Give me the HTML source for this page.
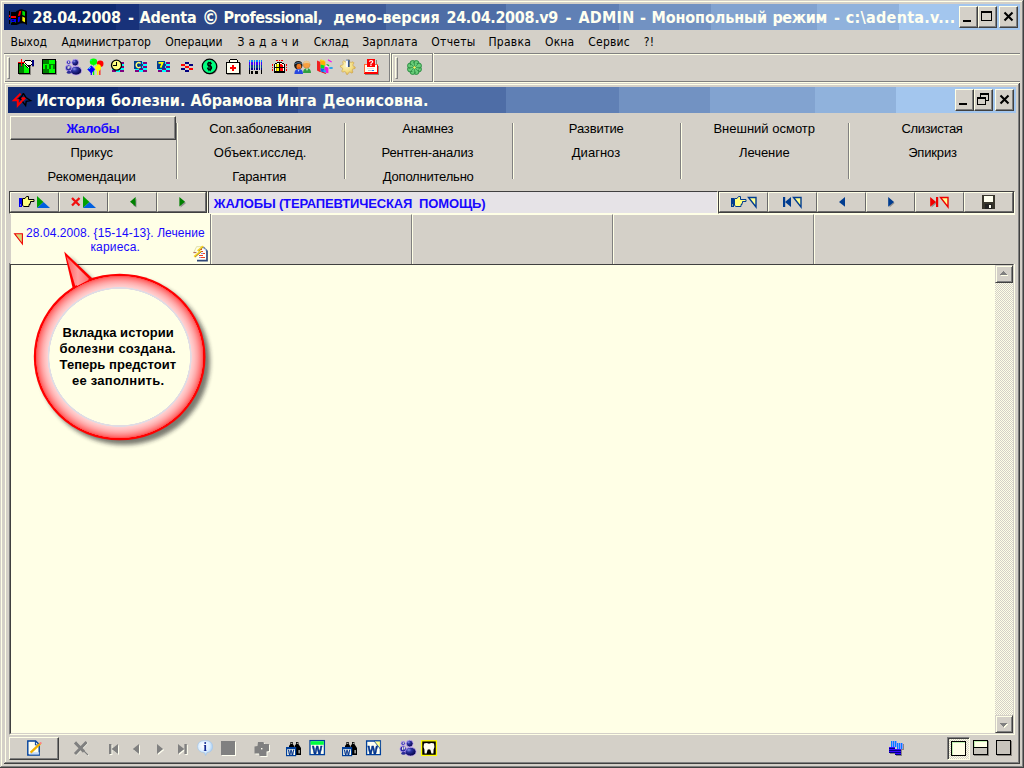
<!DOCTYPE html>
<html lang="ru"><head><meta charset="utf-8"><title>Adenta</title>
<style>
html,body{margin:0;padding:0}
body{width:1024px;height:768px;background:#d4d0c8;position:relative;overflow:hidden;font-family:"Liberation Sans",sans-serif}
div,span{position:absolute;box-sizing:border-box}
.t{white-space:pre}
.g{left:0;top:0;width:0;height:0}
.ln{}
.cap{height:26px;}
.cb{width:19px;height:22px;background:#d4d0c8;border:1px solid;border-color:#ffffe6 #404040 #404040 #ffffe6;box-shadow:inset -1px -1px 0 #808080}
.btn{background:#d4d0c8;border:1px solid;border-color:#ffffe6 #404040 #404040 #ffffe6;box-shadow:inset -1px -1px 0 #808080}
.sb{width:49px;height:20px;top:0;border:1px solid;border-color:#ffffe6 #6a6a6a #6a6a6a #ffffe6}
.sep{width:2px;height:56px;top:123px;border-left:1px solid #808080;border-right:1px solid #ffffe6}
.cell{top:214px;height:50px;border-top:1px solid #ffffe6;border-left:1px solid #ffffe6;border-right:1px solid #808080;background:#d4d0c8}
</style></head>
<body>
<div class="g" id="frame">
<div style="left:1px;top:1px;width:1022px;height:1px;background:#ffffe6"></div><div style="left:1px;top:1px;width:1px;height:765px;background:#ffffe6"></div>
<div style="left:1022px;top:1px;width:1px;height:766px;background:#808080"></div><div style="left:1px;top:766px;width:1022px;height:1px;background:#808080"></div>
<div style="left:1023px;top:0px;width:1px;height:768px;background:#404040"></div><div style="left:0px;top:767px;width:1024px;height:1px;background:#404040"></div>
</div>
<div class="g" id="titlebar">
<div class="cap" style="left:4px;top:4px;width:1016px;background:linear-gradient(to right,#0f2a70 0px,#0f2a70 112px,#18327a 112px,#18327a 135px,#2b4788 135px,#2b4788 296px,#3e5b98 296px,#3e5b98 382px,#4e6da6 382px,#4e6da6 502px,#6080b5 502px,#6080b5 615px,#7292c2 615px,#7292c2 707px,#82a3d0 707px,#82a3d0 813px,#90b2dc 813px,#90b2dc 895px,#a3c6ee 895px)"></div>
<div class="cb" style="left:959px;top:6px"><div style="left:3px;top:13px;width:8px;height:2px;background:#000"></div></div><div class="cb" style="left:978px;top:6px"><div style="left:2px;top:4px;width:11px;height:10px;border:1px solid #000;border-top:2px solid #000"></div></div><div class="cb" style="left:999px;top:6px"><svg width="17" height="20" style="position:absolute;left:0;top:0"><path d="M4.5,5.5 L12.5,13.5 M12.5,5.5 L4.5,13.5" stroke="#000" stroke-width="2.1" fill="none"/></svg></div>
<span class="t" style='left:32.5px;top:8px;line-height:20px;font:bold 16px "DejaVu Sans Condensed","DejaVu Sans","Liberation Sans",sans-serif;font-stretch:condensed;letter-spacing:-0.283px;color:#fffff0'>28.04.2008</span>
<span class="t" style='left:128.0px;top:8px;line-height:20px;font:bold 16px "DejaVu Sans Condensed","DejaVu Sans","Liberation Sans",sans-serif;font-stretch:condensed;letter-spacing:0px;color:#fffff0'>-</span>
<span class="t" style='left:139.5px;top:8px;line-height:20px;font:bold 16px "DejaVu Sans Condensed","DejaVu Sans","Liberation Sans",sans-serif;font-stretch:condensed;letter-spacing:-0.169px;color:#fffff0'>Adenta</span>
<span class="t" style='left:202px;top:6.1px;line-height:20px;font:bold 19px "DejaVu Sans Condensed","DejaVu Sans","Liberation Sans",sans-serif;font-stretch:condensed;letter-spacing:0px;color:#fffff0'>©</span>
<span class="t" style='left:223.5px;top:8px;line-height:20px;font:bold 16px "DejaVu Sans Condensed","DejaVu Sans","Liberation Sans",sans-serif;font-stretch:condensed;letter-spacing:-0.535px;color:#fffff0'>Professional,</span>
<span class="t" style='left:333.2px;top:8px;line-height:20px;font:bold 16px "DejaVu Sans Condensed","DejaVu Sans","Liberation Sans",sans-serif;font-stretch:condensed;letter-spacing:0.038px;color:#fffff0'>демо-версия</span>
<span class="t" style='left:446.5px;top:8px;line-height:20px;font:bold 16px "DejaVu Sans Condensed","DejaVu Sans","Liberation Sans",sans-serif;font-stretch:condensed;letter-spacing:-0.343px;color:#fffff0'>24.04.2008.v9</span>
<span class="t" style='left:565.6px;top:8px;line-height:20px;font:bold 16px "DejaVu Sans Condensed","DejaVu Sans","Liberation Sans",sans-serif;font-stretch:condensed;letter-spacing:0px;color:#fffff0'>-</span>
<span class="t" style='left:578.4px;top:8px;line-height:20px;font:bold 16px "DejaVu Sans Condensed","DejaVu Sans","Liberation Sans",sans-serif;font-stretch:condensed;letter-spacing:0.257px;color:#fffff0'>ADMIN</span>
<span class="t" style='left:640.0px;top:8px;line-height:20px;font:bold 16px "DejaVu Sans Condensed","DejaVu Sans","Liberation Sans",sans-serif;font-stretch:condensed;letter-spacing:0px;color:#fffff0'>-</span>
<span class="t" style='left:651.4px;top:8px;line-height:20px;font:bold 16px "DejaVu Sans Condensed","DejaVu Sans","Liberation Sans",sans-serif;font-stretch:condensed;letter-spacing:-0.09px;color:#fffff0'>Монопольный</span>
<span class="t" style='left:772.4px;top:8px;line-height:20px;font:bold 16px "DejaVu Sans Condensed","DejaVu Sans","Liberation Sans",sans-serif;font-stretch:condensed;letter-spacing:-0.346px;color:#fffff0'>режим</span>
<span class="t" style='left:834.0px;top:8px;line-height:20px;font:bold 16px "DejaVu Sans Condensed","DejaVu Sans","Liberation Sans",sans-serif;font-stretch:condensed;letter-spacing:0px;color:#fffff0'>-</span>
<span class="t" style='left:845.8px;top:8px;line-height:20px;font:bold 16px "DejaVu Sans Condensed","DejaVu Sans","Liberation Sans",sans-serif;font-stretch:condensed;letter-spacing:0.25px;color:#fffff0'>c:\adenta.v...</span>
</div>
<div class="g" id="menubar">
<span class="t" style='left:10.6px;top:35.4px;line-height:16px;font:12px "DejaVu Sans Condensed","DejaVu Sans","Liberation Sans",sans-serif;font-stretch:condensed;letter-spacing:-0.005px;color:#000'>Выход</span>
<span class="t" style='left:61.4px;top:35.4px;line-height:16px;font:12px "DejaVu Sans Condensed","DejaVu Sans","Liberation Sans",sans-serif;font-stretch:condensed;letter-spacing:-0.005px;color:#000'>Администратор</span>
<span class="t" style='left:165.3px;top:35.4px;line-height:16px;font:12px "DejaVu Sans Condensed","DejaVu Sans","Liberation Sans",sans-serif;font-stretch:condensed;letter-spacing:0.01px;color:#000'>Операции</span>
<span class="t" style='left:237.4px;top:35.4px;line-height:16px;font:12px "DejaVu Sans Condensed","DejaVu Sans","Liberation Sans",sans-serif;font-stretch:condensed;letter-spacing:0.327px;color:#000'>З а д а ч и</span>
<span class="t" style='left:313.7px;top:35.4px;line-height:16px;font:12px "DejaVu Sans Condensed","DejaVu Sans","Liberation Sans",sans-serif;font-stretch:condensed;letter-spacing:0.005px;color:#000'>Склад</span>
<span class="t" style='left:362.2px;top:35.4px;line-height:16px;font:12px "DejaVu Sans Condensed","DejaVu Sans","Liberation Sans",sans-serif;font-stretch:condensed;letter-spacing:0.221px;color:#000'>Зарплата</span>
<span class="t" style='left:431.3px;top:35.4px;line-height:16px;font:12px "DejaVu Sans Condensed","DejaVu Sans","Liberation Sans",sans-serif;font-stretch:condensed;letter-spacing:0.281px;color:#000'>Отчеты</span>
<span class="t" style='left:488.4px;top:35.4px;line-height:16px;font:12px "DejaVu Sans Condensed","DejaVu Sans","Liberation Sans",sans-serif;font-stretch:condensed;letter-spacing:0.265px;color:#000'>Правка</span>
<span class="t" style='left:545.1px;top:35.4px;line-height:16px;font:12px "DejaVu Sans Condensed","DejaVu Sans","Liberation Sans",sans-serif;font-stretch:condensed;letter-spacing:0.074px;color:#000'>Окна</span>
<span class="t" style='left:588.3px;top:35.4px;line-height:16px;font:12px "DejaVu Sans Condensed","DejaVu Sans","Liberation Sans",sans-serif;font-stretch:condensed;letter-spacing:0.216px;color:#000'>Сервис</span>
<span class="t" style='left:643.7px;top:35.4px;line-height:16px;font:12px "DejaVu Sans Condensed","DejaVu Sans","Liberation Sans",sans-serif;font-stretch:condensed;letter-spacing:0.27px;color:#000'>?!</span>
</div>
<div class="g" id="toolbar">
<div style="left:4px;top:53px;width:1016px;height:1px;background:#808080"></div><div style="left:4px;top:54px;width:1016px;height:1px;background:#ffffe6"></div>
<div style="left:4px;top:81px;width:1016px;height:1px;background:#808080"></div><div style="left:4px;top:82px;width:1016px;height:1px;background:#ffffe6"></div>
<div style="left:4px;top:54px;width:1px;height:28px;background:#ffffe6"></div>
<div style="left:389px;top:53px;width:1px;height:29px;background:#808080"></div><div style="left:390px;top:53px;width:1px;height:30px;background:#ffffe6"></div><div style="left:391px;top:53px;width:1px;height:29px;background:#808080"></div><div style="left:392px;top:54px;width:1px;height:28px;background:#ffffe6"></div>
<div style="left:432px;top:53px;width:1px;height:29px;background:#808080"></div><div style="left:433px;top:53px;width:1px;height:30px;background:#ffffe6"></div>
<div style="left:7px;top:57px;width:3px;height:22px;border:1px solid;border-color:#ffffe6 #808080 #808080 #ffffe6"></div>
<div style="left:395px;top:57px;width:3px;height:22px;border:1px solid;border-color:#ffffe6 #808080 #808080 #ffffe6"></div>
</div>
<div class="g" id="child-frame">
<div style="left:5px;top:84px;width:1013px;height:1px;background:#ffffe6"></div><div style="left:5px;top:84px;width:1px;height:678px;background:#ffffe6"></div>
<div style="left:1018px;top:84px;width:1px;height:679px;background:#808080"></div><div style="left:5px;top:762px;width:1014px;height:1px;background:#808080"></div>
<div style="left:1019px;top:83px;width:1px;height:681px;background:#404040"></div><div style="left:4px;top:763px;width:1016px;height:1px;background:#404040"></div>
</div>
<div class="g" id="child-titlebar">
<div class="cap" style="left:8px;top:87px;width:1008px;background:linear-gradient(to right,#0f2a70 0px,#0f2a70 110px,#18327a 110px,#18327a 132px,#2b4788 132px,#2b4788 290px,#3e5b98 290px,#3e5b98 382px,#4e6da6 382px,#4e6da6 498px,#6080b5 498px,#6080b5 611px,#7292c2 611px,#7292c2 702px,#82a3d0 702px,#82a3d0 807px,#90b2dc 807px,#90b2dc 888px,#a3c6ee 888px)"></div>
<div class="cb" style="left:955px;top:89px"><div style="left:3px;top:13px;width:8px;height:2px;background:#000"></div></div><div class="cb" style="left:974px;top:89px"><div style="left:5px;top:3px;width:9px;height:8px;border:1px solid #000;border-top:2px solid #000"></div><div style="left:2px;top:7px;width:9px;height:8px;border:1px solid #000;border-top:2px solid #000;background:#d4d0c8"></div></div><div class="cb" style="left:995px;top:89px"><svg width="17" height="20" style="position:absolute;left:0;top:0"><path d="M4.5,5.5 L12.5,13.5 M12.5,5.5 L4.5,13.5" stroke="#000" stroke-width="2.1" fill="none"/></svg></div>
<span class="t" style='left:36.5px;top:91px;line-height:20px;font:bold 16px "DejaVu Sans Condensed","DejaVu Sans","Liberation Sans",sans-serif;font-stretch:condensed;letter-spacing:0.049px;color:#fffff0'>История</span>
<span class="t" style='left:111.0px;top:91px;line-height:20px;font:bold 16px "DejaVu Sans Condensed","DejaVu Sans","Liberation Sans",sans-serif;font-stretch:condensed;letter-spacing:0.049px;color:#fffff0'>болезни.</span>
<span class="t" style='left:190.5px;top:91px;line-height:20px;font:bold 16px "DejaVu Sans Condensed","DejaVu Sans","Liberation Sans",sans-serif;font-stretch:condensed;letter-spacing:0.003px;color:#fffff0'>Абрамова</span>
<span class="t" style='left:277px;top:91px;line-height:20px;font:bold 16px "DejaVu Sans Condensed","DejaVu Sans","Liberation Sans",sans-serif;font-stretch:condensed;letter-spacing:0.161px;color:#fffff0'>Инга</span>
<span class="t" style='left:322.5px;top:91px;line-height:20px;font:bold 16px "DejaVu Sans Condensed","DejaVu Sans","Liberation Sans",sans-serif;font-stretch:condensed;letter-spacing:0.08px;color:#fffff0'>Деонисовна.</span>
</div>
<div class="g" id="tabs">
<div class="btn" style="left:10px;top:116px;width:166px;height:24px;background:#c9c5be"></div>
<div class="sep" style="left:176px"></div>
<div class="sep" style="left:344px"></div>
<div class="sep" style="left:512px"></div>
<div class="sep" style="left:680px"></div>
<div class="sep" style="left:848px"></div>
<span class="t" style='left:66.4px;top:121px;line-height:16px;font:bold 13px "Liberation Sans",sans-serif;letter-spacing:-0.199px;color:#1808ff'>Жалобы</span>
<span class="t" style='left:70.4px;top:145px;line-height:16px;font:13px "Liberation Sans",sans-serif;letter-spacing:0.035px;color:#000'>Прикус</span>
<span class="t" style='left:47.6px;top:169px;line-height:16px;font:13px "Liberation Sans",sans-serif;letter-spacing:-0.042px;color:#000'>Рекомендации</span>
<span class="t" style='left:209.2px;top:121px;line-height:16px;font:13px "Liberation Sans",sans-serif;letter-spacing:-0.193px;color:#000'>Соп.заболевания</span>
<span class="t" style='left:213.8px;top:145px;line-height:16px;font:13px "Liberation Sans",sans-serif;letter-spacing:0.014px;color:#000'>Объект.исслед.</span>
<span class="t" style='left:232.2px;top:169px;line-height:16px;font:13px "Liberation Sans",sans-serif;letter-spacing:-0.199px;color:#000'>Гарантия</span>
<span class="t" style='left:402.2px;top:121px;line-height:16px;font:13px "Liberation Sans",sans-serif;letter-spacing:-0.14px;color:#000'>Анамнез</span>
<span class="t" style='left:381.6px;top:145px;line-height:16px;font:13px "Liberation Sans",sans-serif;letter-spacing:-0.165px;color:#000'>Рентген-анализ</span>
<span class="t" style='left:382.8px;top:169px;line-height:16px;font:13px "Liberation Sans",sans-serif;letter-spacing:-0.211px;color:#000'>Дополнительно</span>
<span class="t" style='left:568.8px;top:121px;line-height:16px;font:13px "Liberation Sans",sans-serif;letter-spacing:-0.124px;color:#000'>Развитие</span>
<span class="t" style='left:571.8px;top:145px;line-height:16px;font:13px "Liberation Sans",sans-serif;letter-spacing:0.017px;color:#000'>Диагноз</span>
<span class="t" style='left:713.4px;top:121px;line-height:16px;font:13px "Liberation Sans",sans-serif;letter-spacing:0.001px;color:#000'>Внешний осмотр</span>
<span class="t" style='left:739.0px;top:145px;line-height:16px;font:13px "Liberation Sans",sans-serif;letter-spacing:-0.062px;color:#000'>Лечение</span>
<span class="t" style='left:901.4px;top:121px;line-height:16px;font:13px "Liberation Sans",sans-serif;letter-spacing:-0.324px;color:#000'>Слизистая</span>
<span class="t" style='left:908.2px;top:145px;line-height:16px;font:13px "Liberation Sans",sans-serif;letter-spacing:-0.171px;color:#000'>Эпикриз</span>
</div>
<div class="g" id="record-bar">
<div style="left:9px;top:191px;width:199px;height:23px;border:1px solid;border-color:#404040 #ffffe6 #ffffe6 #404040"><div style="left:0;top:0;width:197px;height:21px;border-right:1px solid #404040;border-bottom:1px solid #404040"><div class="sb" style="left:0px"></div><div class="sb" style="left:49px"></div><div class="sb" style="left:98px"></div><div class="sb" style="left:147px"></div></div></div>
<div style="left:718px;top:191px;width:297px;height:23px;border:1px solid;border-color:#404040 #ffffe6 #ffffe6 #404040"><div style="left:0;top:0;width:295px;height:21px;border-right:1px solid #404040;border-bottom:1px solid #404040"><div class="sb" style="left:0px"></div><div class="sb" style="left:49px"></div><div class="sb" style="left:98px"></div><div class="sb" style="left:147px"></div><div class="sb" style="left:196px"></div><div class="sb" style="left:245px"></div></div></div>
<div style="left:208px;top:191px;width:510px;height:23px;background:#e6e3e7;border:1px solid;border-color:#404040 #ffffe6 #ffffe6 #404040"></div>
<span class="t" style='left:213.8px;top:196px;line-height:16px;font:bold 13px "Liberation Sans",sans-serif;letter-spacing:-0.154px;color:#1808ff'>ЖАЛОБЫ (ТЕРАПЕВТИЧЕСКАЯ  ПОМОЩЬ)</span>
</div>
<div class="g" id="records">
<div style="left:11px;top:213px;width:199px;height:51px;background:#ffffe6"></div>
<div style="left:210px;top:214px;width:1px;height:50px;background:#808080"></div>
<div class="cell" style="left:211px;width:201px"></div>
<div class="cell" style="left:412px;width:201px"></div>
<div class="cell" style="left:613px;width:201px"></div>
<div class="cell" style="left:814px;width:201px;border-right:none"></div>
<span class="t" style='left:26.0px;top:225.6px;line-height:15px;font:12px "Liberation Sans",sans-serif;letter-spacing:0.072px;color:#1808ff'>28.04.2008. {15-14-13}. Лечение</span>
<span class="t" style='left:90.4px;top:240.4px;line-height:15px;font:12px "Liberation Sans",sans-serif;letter-spacing:0.184px;color:#1808ff'>кариеса.</span>
</div>
<div class="g" id="content">
<div style="left:9px;top:264px;width:1006px;height:471px;background:#ffffe6;border-left:1px solid #808080;border-right:1px solid #ffffe6;border-bottom:1px solid #ffffe6"><div style="left:0;top:0;width:1004px;height:470px;border-left:1px solid #404040;border-top:1px solid #404040;border-right:1px solid #d4d0c8;border-bottom:1px solid #d4d0c8"></div></div>
<div style="left:9px;top:263px;width:1px;height:1px;background:#808080"></div>
<div style="left:995px;top:265px;width:18px;height:468px;background:repeating-conic-gradient(#ffffe6 0% 25%, #d4d0c8 0% 50%) 0 0/2px 2px"></div>
<div style="left:995px;top:265px;width:18px;height:18px;background:#d4d0c8;border:1px solid;border-color:#d4d0c8 #404040 #404040 #d4d0c8;box-shadow:inset 1px 1px 0 #ffffe6, inset -1px -1px 0 #808080"><svg width="16" height="16" shape-rendering="crispEdges" style="position:absolute;left:0;top:0"><rect x="8" y="6" width="1" height="1" fill="#ffffe6"/><rect x="7" y="7" width="3" height="1" fill="#ffffe6"/><rect x="6" y="8" width="5" height="1" fill="#ffffe6"/><rect x="5" y="9" width="7" height="1" fill="#ffffe6"/><rect x="7" y="5" width="1" height="1" fill="#808080"/><rect x="6" y="6" width="3" height="1" fill="#808080"/><rect x="5" y="7" width="5" height="1" fill="#808080"/><rect x="4" y="8" width="7" height="1" fill="#808080"/></svg></div><div style="left:995px;top:715px;width:18px;height:18px;background:#d4d0c8;border:1px solid;border-color:#d4d0c8 #404040 #404040 #d4d0c8;box-shadow:inset 1px 1px 0 #ffffe6, inset -1px -1px 0 #808080"><svg width="16" height="16" shape-rendering="crispEdges" style="position:absolute;left:0;top:0"><rect x="5" y="8" width="7" height="1" fill="#ffffe6"/><rect x="6" y="9" width="5" height="1" fill="#ffffe6"/><rect x="7" y="10" width="3" height="1" fill="#ffffe6"/><rect x="8" y="11" width="1" height="1" fill="#ffffe6"/><rect x="4" y="7" width="7" height="1" fill="#808080"/><rect x="5" y="8" width="5" height="1" fill="#808080"/><rect x="6" y="9" width="3" height="1" fill="#808080"/><rect x="7" y="10" width="1" height="1" fill="#808080"/></svg></div>
</div>
<div class="g" id="statusbar">
<div class="btn" style="left:9px;top:737px;width:50px;height:23px"></div>
<div style="left:947px;top:737px;width:23px;height:23px;background:repeating-conic-gradient(#ffffe6 0% 25%, #d4d0c8 0% 50%) 0 0/2px 2px;border:1px solid;border-color:#808080 #ffffe6 #ffffe6 #808080;box-shadow:inset 1px 1px 0 #404040"></div>
</div>
<div class="g" id="callout">
<svg width="260" height="230" viewBox="0 230 260 230" style="position:absolute;left:0;top:230px">
<defs>
<radialGradient id="gco" cx="0.5" cy="0.5" r="0.5">
<stop offset="0" stop-color="#ffffe6"/><stop offset="0.816" stop-color="#ffffe6"/><stop offset="0.821" stop-color="#e0dce4"/><stop offset="0.836" stop-color="#e0dce4"/>
<stop offset="0.841" stop-color="#ffd0d0"/><stop offset="0.872" stop-color="#ffc0c0"/><stop offset="0.904" stop-color="#ffa8a8"/><stop offset="0.928" stop-color="#ff9090"/><stop offset="0.956" stop-color="#ff7070"/><stop offset="0.972" stop-color="#ff5050"/><stop offset="0.977" stop-color="#ff0000"/><stop offset="1" stop-color="#ff0000"/>
</radialGradient>
<linearGradient id="gpt" x1="0" y1="0" x2="1" y2="0"><stop offset="0" stop-color="#ff6060"/><stop offset="0.5" stop-color="#ffa0a0"/><stop offset="1" stop-color="#ff7070"/></linearGradient>
<filter id="fsh" x="-20%" y="-20%" width="150%" height="150%"><feGaussianBlur stdDeviation="2"/></filter>
</defs>
<g transform="translate(4.5,4.5)" filter="url(#fsh)" opacity="0.6"><ellipse cx="119.65" cy="357" rx="85.8" ry="83.3" fill="#202020"/><path d="M64.4,252.3 L92,279 L73.5,289 Z" fill="#202020"/></g>
<path d="M64.2,251.6 L92.5,278.6 L73,289.5 Z" fill="#ff0000"/>
<path d="M66.4,256.6 L89.6,279.6 L75.6,287 Z" fill="url(#gpt)"/>
<ellipse cx="119.65" cy="357" rx="85.85" ry="83.3" fill="url(#gco)"/>
<path d="M67.2,258.4 L88.6,280 L77,286 Z" fill="url(#gpt)"/>
</svg>
<span class="t" style='left:62.6px;top:325px;line-height:16px;font:bold 13px "Liberation Sans",sans-serif;letter-spacing:0.048px;color:#000'>Вкладка истории</span>
<span class="t" style='left:59.6px;top:341px;line-height:16px;font:bold 13px "Liberation Sans",sans-serif;letter-spacing:0.24px;color:#000'>болезни создана.</span>
<span class="t" style='left:59.6px;top:357px;line-height:16px;font:bold 13px "Liberation Sans",sans-serif;letter-spacing:0.039px;color:#000'>Теперь предстоит</span>
<span class="t" style='left:71.9px;top:373px;line-height:16px;font:bold 13px "Liberation Sans",sans-serif;letter-spacing:0.257px;color:#000'>ее заполнить.</span>
</div>
<svg width="1024" height="768" viewBox="0 0 1024 768" style="position:absolute;left:0;top:0"><defs><radialGradient id="gmsn" cx="0.35" cy="0.3" r="0.8"><stop offset="0" stop-color="#8890e8"/><stop offset="0.3" stop-color="#2c32a0"/><stop offset="0.75" stop-color="#0c0c58"/><stop offset="1" stop-color="#04042c"/></radialGradient><linearGradient id="gbar" x1="0" y1="0" x2="0" y2="1"><stop offset="0" stop-color="#0090ff"/><stop offset="0.18" stop-color="#0090ff"/><stop offset="0.2" stop-color="#4000ff"/><stop offset="0.48" stop-color="#4000ff"/><stop offset="0.5" stop-color="#004890"/><stop offset="0.75" stop-color="#004890"/><stop offset="0.77" stop-color="#000090"/><stop offset="1" stop-color="#000090"/></linearGradient><linearGradient id="gpin" x1="0" y1="0" x2="1" y2="0"><stop offset="0" stop-color="#ffffff"/><stop offset="0.45" stop-color="#e8f0ff"/><stop offset="0.55" stop-color="#4060a0"/><stop offset="1" stop-color="#203860"/></linearGradient><radialGradient id="ggear" cx="0.4" cy="0.4" r="0.7"><stop offset="0" stop-color="#fff6c8"/><stop offset="0.6" stop-color="#f2dc80"/><stop offset="1" stop-color="#dcae48"/></radialGradient><radialGradient id="ginfo" cx="0.4" cy="0.35" r="0.7"><stop offset="0" stop-color="#ffffff"/><stop offset="0.6" stop-color="#d8ecff"/><stop offset="1" stop-color="#90c0f0"/></radialGradient></defs><g shape-rendering="crispEdges"><rect x="9" y="11" width="1" height="13" fill="#000" /><rect x="9" y="15" width="1" height="2" fill="#f00" /><rect x="9" y="18" width="1" height="2" fill="#00f" /><rect x="11" y="12" width="6" height="13" fill="#000" /><rect x="11" y="16" width="5" height="2" fill="#f00" /><rect x="11" y="19" width="5" height="3" fill="#0000f0" /><rect x="12" y="20" width="2" height="1" fill="#000060" /><rect x="11" y="22" width="1" height="1" fill="#006000" /><rect x="15" y="22" width="1" height="1" fill="#006000" /></g><path d="M16,12 Q16,10.5 18,10.5 Q21,8.5 24,10 Q26.5,10 27,11.5 V25 L24.5,23.5 Q21,22.5 18,24.5 L16,25 Z" fill="#000" /><path d="M19.2,11.3 L21.3,10.8 L20.2,15.4 L17.9,16 Z" fill="#f00" /><path d="M22.3,10.8 L25,11.8 L25,16 L22.3,15 Z" fill="#00e000" /><path d="M18,17.2 L20.2,16.6 L19.6,21.5 L17.8,22.5 Z" fill="#0000f0" /><path d="M22.3,16.6 L25,17.8 L25,22.3 L22.3,21 Z" fill="#f0f000" /><path d="M20.6,93.6 L14,100.3 H17.8 V105.4 L24.6,98.2 H21.2" fill="none" stroke="#f00" stroke-width="2.0" stroke-linejoin="miter"/><path d="M23.4,93.4 L26,97.6 L30.6,100.6 L26.2,101.4 L25.6,105.6 L22.6,101.6 M23.4,93.4 L21.6,96.6 L19.4,98.4 L21.4,99.6" fill="none" stroke="#000" stroke-width="1.4" /><g shape-rendering="crispEdges"><rect x="19" y="74" width="12" height="1" fill="#8a8680" /><rect x="30" y="65" width="1" height="9" fill="#8a8680" /><rect x="18" y="63" width="12" height="11" fill="#000" /><rect x="19" y="64" width="5" height="9" fill="#008000" /><rect x="24" y="64" width="5" height="9" fill="#00ff00" /><rect x="20" y="66" width="2" height="1" fill="#004060" /><rect x="25" y="60" width="6" height="1" fill="#000" /><rect x="24" y="61" width="1" height="1" fill="#000" /><rect x="25" y="61" width="6" height="4" fill="#fffff0" /><rect x="31" y="61" width="1" height="1" fill="#000" /><rect x="31" y="62" width="1" height="2" fill="#fffff0" /><rect x="31" y="64" width="1" height="1" fill="#000" /><rect x="28" y="65" width="3" height="1" fill="#000" /><rect x="32" y="60" width="2" height="6" fill="#000080" /><rect x="32" y="66" width="2" height="1" fill="#8a8680" /><rect x="23" y="62" width="1" height="1" fill="#fffff0" /><rect x="24" y="62" width="1" height="1" fill="#000" /><rect x="25" y="62" width="1" height="1" fill="#fffff0" /><rect x="24" y="63" width="1" height="1" fill="#fffff0" /><rect x="25" y="63" width="1" height="1" fill="#000" /><rect x="26" y="63" width="1" height="1" fill="#fffff0" /><rect x="25" y="64" width="1" height="1" fill="#fffff0" /><rect x="26" y="64" width="1" height="1" fill="#000" /><rect x="27" y="64" width="1" height="1" fill="#fffff0" /><rect x="25" y="65" width="1" height="1" fill="#000" /><rect x="26" y="65" width="1" height="1" fill="#fffff0" /><rect x="27" y="65" width="1" height="1" fill="#000" /><rect x="26" y="66" width="1" height="1" fill="#000" /><rect x="27" y="66" width="1" height="1" fill="#fffff0" /><rect x="28" y="66" width="1" height="1" fill="#000" /><rect x="27" y="67" width="1" height="1" fill="#000" /><rect x="28" y="67" width="1" height="1" fill="#fffff0" /><rect x="29" y="67" width="1" height="1" fill="#000" /><rect x="18" y="62" width="7" height="1" fill="#f00" /><rect x="21" y="59" width="1" height="7" fill="#f00" /></g><g shape-rendering="crispEdges"><rect x="43" y="74" width="14" height="1" fill="#8a8680" /><rect x="56" y="61" width="1" height="13" fill="#8a8680" /><rect x="42" y="59" width="14" height="15" fill="#000" /><rect x="43" y="60" width="6" height="4" fill="#008000" /><rect x="49" y="60" width="6" height="4" fill="#00ff00" /><rect x="43" y="64" width="6" height="5" fill="#00ff00" /><rect x="45" y="65" width="2" height="4" fill="#008000" /><rect x="49" y="64" width="6" height="5" fill="#008000" /><rect x="51" y="65" width="2" height="4" fill="#00ff00" /><rect x="43" y="69" width="6" height="4" fill="#008000" /><rect x="49" y="69" width="6" height="4" fill="#00ff00" /></g><ellipse cx="76" cy="70.7" rx="5.6" ry="4.4" fill="url(#gmsn)" stroke="#c8a8ff" stroke-width="0.8" /><circle cx="75.2" cy="62.6" r="3.4" fill="url(#gmsn)" stroke="#c8a8ff" stroke-width="0.8" /><ellipse cx="68.6" cy="68" rx="3.2" ry="3" fill="#2c2ca0" stroke="#c8a8ff" stroke-width="0.7" /><circle cx="68.6" cy="62.4" r="2.1" fill="#3434a8" stroke="#c8a8ff" stroke-width="0.7" /><rect x="67.6" y="66.2" width="1.2" height="2.6" fill="#ffffe0" /><rect x="69.4" y="66" width="0.9" height="2.4" fill="#ffffe0" /><rect x="68.2" y="61.2" width="1" height="2" fill="#ffffe0" /><ellipse cx="69" cy="72.3" rx="2.2" ry="1.5" fill="#2c2c98" /><rect x="90.7" y="72" width="1.2" height="3" fill="#0000ff" /><rect x="93" y="70.5" width="1.2" height="4.5" fill="#00ff00" /><rect x="97" y="70.5" width="1.3" height="4.5" fill="#ffff00" /><rect x="99.3" y="66" width="1.1" height="9" fill="#ff0000" /><ellipse cx="93.5" cy="61.8" rx="3.7" ry="3.2" fill="#00ff00" /><path d="M93,64.5 L94.5,64.5 L93.8,66.5 Z" fill="#00ff00" /><circle cx="100.2" cy="63.8" r="3.3" fill="#ff0000" /><path d="M91.3,65.8 L94.8,69.4 L91.3,73 L87.8,69.4 Z" fill="#0000ff" stroke="#0000ff" stroke-width="0.8" stroke-linejoin="round"/><ellipse cx="98" cy="67.6" rx="3" ry="3.4" fill="#ffff00" /><path d="M90.3,60.2 L92,59.4 L91,61.2 Z" fill="#00ffff" /><path d="M88.4,68.6 L90.6,66.4 L90.8,67.6 L89.4,69 Z" fill="#40ffff" /><path d="M94.8,65.6 L96.8,64.4 L96,66.6 Z" fill="#40ffff" /><g shape-rendering="crispEdges"><rect x="112" y="62" width="4" height="2" fill="#800080" /><rect x="116" y="62" width="4" height="2" fill="#00ffff" /><rect x="120" y="62" width="4" height="2" fill="#800080" /><rect x="112" y="64" width="4" height="2" fill="#00ffff" /><rect x="116" y="64" width="4" height="2" fill="#800080" /><rect x="120" y="64" width="4" height="2" fill="#00ffff" /><rect x="112" y="66" width="4" height="2" fill="#800080" /><rect x="116" y="66" width="4" height="2" fill="#00ffff" /><rect x="120" y="66" width="4" height="2" fill="#800080" /><rect x="112" y="68" width="4" height="2" fill="#00ffff" /><rect x="116" y="68" width="4" height="2" fill="#800080" /><rect x="120" y="68" width="4" height="2" fill="#00ffff" /><rect x="112" y="70" width="4" height="2" fill="#800080" /><rect x="116" y="70" width="4" height="2" fill="#00ffff" /><rect x="120" y="70" width="4" height="2" fill="#800080" /></g><circle cx="116.5" cy="65.2" r="5" fill="#ffff80" stroke="#000" stroke-width="1.3" /><g shape-rendering="crispEdges"><rect x="116" y="62" width="1" height="4" fill="#000" /><rect x="113" y="65" width="4" height="1" fill="#000" /></g><g shape-rendering="crispEdges"><rect x="135" y="62" width="4" height="2" fill="#800080" /><rect x="139" y="62" width="4" height="2" fill="#00ffff" /><rect x="143" y="62" width="4" height="2" fill="#800080" /><rect x="135" y="64" width="4" height="2" fill="#00ffff" /><rect x="139" y="64" width="4" height="2" fill="#800080" /><rect x="143" y="64" width="4" height="2" fill="#00ffff" /><rect x="135" y="66" width="4" height="2" fill="#800080" /><rect x="139" y="66" width="4" height="2" fill="#00ffff" /><rect x="143" y="66" width="4" height="2" fill="#800080" /><rect x="135" y="68" width="4" height="2" fill="#00ffff" /><rect x="139" y="68" width="4" height="2" fill="#800080" /><rect x="143" y="68" width="4" height="2" fill="#00ffff" /><rect x="135" y="70" width="4" height="2" fill="#800080" /><rect x="139" y="70" width="4" height="2" fill="#00ffff" /><rect x="143" y="70" width="4" height="2" fill="#800080" /><rect x="134" y="61" width="8" height="8" fill="#003c90" /></g><path d="M140.6,63.4 A2.5,2.6 0 1 0 140.6,66.8" fill="none" stroke="#ffff70" stroke-width="1.5" /><g shape-rendering="crispEdges"><rect x="158" y="62" width="4" height="2" fill="#800080" /><rect x="162" y="62" width="4" height="2" fill="#00ffff" /><rect x="166" y="62" width="4" height="2" fill="#800080" /><rect x="158" y="64" width="4" height="2" fill="#00ffff" /><rect x="162" y="64" width="4" height="2" fill="#800080" /><rect x="166" y="64" width="4" height="2" fill="#00ffff" /><rect x="158" y="66" width="4" height="2" fill="#800080" /><rect x="162" y="66" width="4" height="2" fill="#00ffff" /><rect x="166" y="66" width="4" height="2" fill="#800080" /><rect x="158" y="68" width="4" height="2" fill="#00ffff" /><rect x="162" y="68" width="4" height="2" fill="#800080" /><rect x="166" y="68" width="4" height="2" fill="#00ffff" /><rect x="158" y="70" width="4" height="2" fill="#800080" /><rect x="162" y="70" width="4" height="2" fill="#00ffff" /><rect x="166" y="70" width="4" height="2" fill="#800080" /><rect x="157" y="61" width="8" height="8" fill="#003c90" /></g><path d="M158.5,62.8 H162.6 L160.6,67.6" fill="none" stroke="#ffff00" stroke-width="1.7" /><g shape-rendering="crispEdges"><rect x="185" y="62" width="4" height="2" fill="#000080" /><rect x="181" y="64" width="4" height="2" fill="#f00" /><rect x="189" y="64" width="4" height="2" fill="#000080" /><rect x="185" y="66" width="4" height="2" fill="#f00" /><rect x="181" y="68" width="4" height="2" fill="#000080" /><rect x="189" y="68" width="4" height="2" fill="#f00" /><rect x="185" y="70" width="4" height="2" fill="#000080" /></g><circle cx="210.3" cy="67.3" r="7.3" fill="#8a8680" /><circle cx="209.5" cy="66.4" r="7.2" fill="#00ff80" stroke="#000" stroke-width="1.2" /><rect x="208.4" y="61.6" width="0.8" height="9.6" fill="#000" /><rect x="210" y="61.6" width="0.8" height="9.6" fill="#000" /><text x="209.5" y="70.2" text-anchor="middle" font-family="Liberation Sans, sans-serif" font-weight="bold" font-size="10" fill="#000" opacity="0.99">$</text><g shape-rendering="crispEdges"><rect x="230" y="59" width="7" height="1" fill="#000" /><rect x="229" y="60" width="1" height="2" fill="#000" /><rect x="237" y="60" width="1" height="2" fill="#000" /><rect x="230" y="60" width="7" height="2" fill="#fffff0" /><rect x="227" y="74" width="14" height="1" fill="#8a8680" /><rect x="240" y="63" width="1" height="11" fill="#5a5650" /><rect x="226" y="62" width="14" height="12" fill="#000" /><rect x="227" y="63" width="12" height="10" fill="#fffff0" /><rect x="232" y="65" width="2" height="6" fill="#f00" /><rect x="230" y="67" width="6" height="2" fill="#f00" /></g><g shape-rendering="crispEdges"><rect x="249" y="60" width="1" height="10" fill="url(#gbar)" /><rect x="249" y="70" width="1" height="4" fill="#000" /><rect x="251" y="60" width="2" height="10" fill="url(#gbar)" /><rect x="254" y="60" width="1" height="10" fill="url(#gbar)" /><rect x="256" y="60" width="2" height="10" fill="url(#gbar)" /><rect x="259" y="60" width="1" height="10" fill="url(#gbar)" /><rect x="261" y="60" width="1" height="10" fill="url(#gbar)" /><rect x="261" y="70" width="1" height="4" fill="#000" /><rect x="251" y="71" width="2" height="3" fill="#000" /><rect x="251.6" y="71.8" width="0.8" height="1.4" fill="#d4d0c8" /><rect x="254.5" y="71" width="1" height="3" fill="#000" /><rect x="256" y="71" width="2" height="3" fill="#000" /><rect x="256.6" y="71.8" width="0.8" height="1.4" fill="#d4d0c8" /></g><g shape-rendering="crispEdges"><rect x="275" y="63" width="9" height="9" fill="#fffff0" /><rect x="277" y="62" width="5" height="1" fill="#000" /><rect x="275" y="63" width="2" height="1" fill="#000" /><rect x="282" y="63" width="2" height="1" fill="#000" /><rect x="274" y="64" width="1" height="9" fill="#000" /><rect x="284" y="64" width="1" height="9" fill="#000" /><rect x="279" y="62" width="1" height="10" fill="#000" /><rect x="274" y="67" width="11" height="1" fill="#000" /><rect x="274" y="71" width="11" height="2" fill="#000" /><rect x="276" y="64" width="3" height="3" fill="#ffff00" /><rect x="276" y="64" width="1" height="3" fill="#a8a800" /><rect x="276" y="68" width="3" height="3" fill="#ffff00" /><rect x="276" y="68" width="1" height="3" fill="#a8a800" /><rect x="280" y="64" width="3" height="3" fill="#ff0000" /><rect x="280" y="68" width="3" height="3" fill="#ff0000" /><rect x="282" y="64" width="1" height="1" fill="#fffff0" /><rect x="276" y="60" width="2" height="1" fill="#f00" /><rect x="279" y="60" width="1" height="1" fill="#f00" /><rect x="281" y="60" width="2" height="1" fill="#f00" /><rect x="272" y="64" width="1" height="2" fill="#f00" /><rect x="272" y="67" width="1" height="1" fill="#f00" /><rect x="272" y="69" width="1" height="2" fill="#f00" /><rect x="286" y="64" width="1" height="2" fill="#f00" /><rect x="286" y="67" width="1" height="1" fill="#f00" /><rect x="286" y="69" width="1" height="2" fill="#f00" /></g><path d="M303,73 Q303,68.2 307,68.2 Q311,68.2 311,73 Z" fill="#30a040" /><path d="M306,68.4 L307,71 L308,68.4 Z" fill="#f0fff0" /><circle cx="306.6" cy="64.8" r="3.4" fill="#f8a040" stroke="#c88848" stroke-width="0.7" /><path d="M303.2,63.8 Q303.8,60.6 306.8,60.8 Q309.8,60.8 310.2,63.8 Q307,62.2 303.2,63.8 Z" fill="#e8c890" /><path d="M294.4,74 Q294.4,69 298.6,69 Q303,69 303,74 Z" fill="#2848e0" /><path d="M297.6,69.4 L298.6,72 L299.6,69.4 Z" fill="#c0e0ff" /><circle cx="298.3" cy="65.2" r="4.1" fill="#181818" /><ellipse cx="298.9" cy="66.4" rx="2.4" ry="2.7" fill="#f07820" /><rect x="297.8" y="67.6" width="2.2" height="0.8" fill="#d03010" /><path d="M295,63.6 Q298,61.6 301.8,63.4" fill="none" stroke="#5080b0" stroke-width="0.9" /><path d="M317,60.6 L320.6,62 V72 L317,70.6 Z" fill="#f02020" /><path d="M317,70.6 L320.6,72 L326.5,74.2 L325,72.6 Z" fill="#f00000" /><path d="M320,60 L325.4,61.6 V66 L320.6,64.6 Z" fill="#ffb000" /><path d="M320,60 L325.4,61.6 L324,60.2 L321,59.6 Z" fill="#ffe000" /><path d="M320.6,64.4 L324.6,65.6 V69 L320.6,68 Z" fill="#00e020" /><path d="M320.6,68 L324.6,69 V72.4 L320.6,71.6 Z" fill="#1060f0" /><path d="M324.6,66.2 L328.4,67.4 V73.2 L324.6,72.4 Z" fill="#f010e0" /><path d="M324.6,66.2 L326,65.4 L329,66.4 L328.4,67.4 Z" fill="#ffc0ff" /><path d="M323.4,70 L326,70.6 V72.6 L323.4,72 Z" fill="#20b0f0" /><path d="M328.2,59.2 L332,61.4 L331.4,62.6 L327.8,60.4 Z" fill="#f010f0" /><path d="M326,64 L328.4,64.4 L329.4,66 L328.2,66.2 Z" fill="#10c020" /><ellipse cx="331" cy="68" rx="2" ry="1.1" fill="#20a0f0" /><polygon points="355.2,67.0 355.1,68.4 352.8,69.1 352.3,70.0 353.0,72.2 351.9,73.2 349.9,72.0 348.9,72.3 347.8,74.4 346.4,74.3 345.7,72.0 344.8,71.5 342.6,72.2 341.6,71.1 342.8,69.1 342.5,68.1 340.4,67.0 340.5,65.6 342.8,64.9 343.3,64.0 342.6,61.8 343.7,60.8 345.7,62.0 346.7,61.7 347.8,59.6 349.2,59.7 349.9,62.0 350.8,62.5 353.0,61.8 354.0,62.9 352.8,64.9 353.1,65.9" fill="url(#ggear)" stroke="#c89838" stroke-width="0.5"/><rect x="346" y="60" width="3.6" height="7" fill="url(#gpin)" /><rect x="346" y="59.6" width="3.6" height="1" fill="#6080b0" /><g shape-rendering="crispEdges"><rect x="365" y="66" width="14" height="9" fill="#8a8680" /><rect x="364" y="64" width="14" height="10" fill="#f00" /><rect x="364" y="64" width="14" height="1" fill="#ff6a3a" /><rect x="364" y="64" width="1" height="9" fill="#ff6a3a" /><rect x="365" y="65" width="12" height="7" fill="#fffff0" /><rect x="376" y="60" width="1" height="5" fill="#8a8680" /><rect x="367" y="59" width="8" height="8" fill="#f00" /><rect x="372" y="70" width="2" height="1" fill="#1080f0" /><rect x="368" y="70" width="4" height="1" fill="#c0c0d0" /><rect x="367" y="68" width="7" height="1" fill="#e0e0e8" /></g><text x="371" y="66" text-anchor="middle" font-family="Liberation Sans, sans-serif" font-weight="bold" font-size="8.5" fill="#fff" opacity="0.99">?</text><circle cx="418.75" cy="69.26" r="2.7" fill="#68cc78" stroke="#2f8f45" stroke-width="1" /><circle cx="416.26" cy="71.75" r="2.7" fill="#68cc78" stroke="#2f8f45" stroke-width="1" /><circle cx="412.74" cy="71.75" r="2.7" fill="#68cc78" stroke="#2f8f45" stroke-width="1" /><circle cx="410.25" cy="69.26" r="2.7" fill="#68cc78" stroke="#2f8f45" stroke-width="1" /><circle cx="410.25" cy="65.74" r="2.7" fill="#68cc78" stroke="#2f8f45" stroke-width="1" /><circle cx="412.74" cy="63.25" r="2.7" fill="#68cc78" stroke="#2f8f45" stroke-width="1" /><circle cx="416.26" cy="63.25" r="2.7" fill="#68cc78" stroke="#2f8f45" stroke-width="1" /><circle cx="418.75" cy="65.74" r="2.7" fill="#68cc78" stroke="#2f8f45" stroke-width="1" /><circle cx="414.5" cy="67.5" r="4.2" fill="#68cc78" /><path d="M414.5,67.5 L420.90,67.50" fill="none" stroke="#2f8f45" stroke-width="0.7" /><path d="M414.5,67.5 L419.03,72.03" fill="none" stroke="#2f8f45" stroke-width="0.7" /><path d="M414.5,67.5 L414.50,73.90" fill="none" stroke="#2f8f45" stroke-width="0.7" /><path d="M414.5,67.5 L409.97,72.03" fill="none" stroke="#2f8f45" stroke-width="0.7" /><path d="M414.5,67.5 L408.10,67.50" fill="none" stroke="#2f8f45" stroke-width="0.7" /><path d="M414.5,67.5 L409.97,62.97" fill="none" stroke="#2f8f45" stroke-width="0.7" /><path d="M414.5,67.5 L414.50,61.10" fill="none" stroke="#2f8f45" stroke-width="0.7" /><path d="M414.5,67.5 L419.03,62.97" fill="none" stroke="#2f8f45" stroke-width="0.7" /><path d="M414.5,65.9 L416.1,67.5 L414.5,69.1 L412.9,67.5 Z" fill="#f8f060" /><rect x="19" y="198" width="3" height="9" fill="#0000f0" /><rect x="20" y="204.5" width="1" height="1" fill="#ffff80" /><path d="M22.5,198.5 H25 L26.5,196.5 H28.5 V199.5 H34 V201.5 H30.5 V203 H30 V204.5 H29 V206.5 H24 L22.5,205.5 Z" fill="#ffff80" stroke="#000" stroke-width="1" /><path d="M37,196 L43.5,202 L37,208 Z" fill="#00a000" /><path d="M37,208 L43.5,202 L50,208 Z" fill="#0060e0" /><path d="M72,198 L79.5,205.5 M79.5,198 L72,205.5" fill="none" stroke="#f01010" stroke-width="2.3" /><path d="M83,196 L89.5,202 L83,208 Z" fill="#00a000" /><path d="M83,208 L89.5,202 L96,208 Z" fill="#0060e0" /><path d="M136.5,198.4 L133.2,205.4 L136.5,207.4 Z" fill="#909090" /><path d="M135.6,197 V206.6 L130,201.8 Z" fill="#008000" /><path d="M180.4,198.4 L186,203 L180.6,207.6 Z" fill="#909090" /><path d="M179.4,197 V206.6 L185,201.8 Z" fill="#008000" /><rect x="731" y="198" width="3" height="9" fill="#003c90" /><rect x="732" y="204.5" width="1" height="1" fill="#ffff80" /><path d="M734.5,198.5 H737 L738.5,196.5 H740.5 V199.5 H746 V201.5 H742.5 V203 H742 V204.5 H741 V206.5 H736 L734.5,205.5 Z" fill="#ffff80" stroke="#003c90" stroke-width="1" /><path d="M748.5,197.5 H756 V207 Z" fill="#ffff90" stroke="#003c90" stroke-width="1.4" /><rect x="783" y="197" width="2.2" height="10" fill="#003c90" /><path d="M791,197 V207 L785,202 Z" fill="#003c90" /><path d="M793.5,197.5 H801 V207 Z" fill="#ffff90" stroke="#003c90" stroke-width="1.4" /><path d="M845,197 V206.8 L839,201.9 Z" fill="#003c90" /><path d="M889.4,198.4 L894.6,203 L889.6,207.6 Z" fill="#909090" /><path d="M888.2,197 V206.8 L894,201.9 Z" fill="#003c90" /><path d="M931.4,198.4 L937,203 L931.6,207.6 Z" fill="#909090" /><path d="M930.2,197 V206.8 L936,201.9 Z" fill="#f00000" /><rect x="936" y="197" width="2.2" height="10" fill="#f00000" /><path d="M940.5,197.5 H948 V207 Z" fill="#ffff90" stroke="#f00000" stroke-width="1.4" /><g shape-rendering="crispEdges"><rect x="982" y="195" width="13" height="14" fill="#38362c" /><rect x="984" y="196" width="9" height="6" fill="#fffff0" /><rect x="985" y="204" width="7" height="5" fill="#222" /><rect x="989" y="205" width="2" height="3" fill="#fffff0" /></g><path d="M14.6,233.8 H22.4 V244 Z" fill="#d8d878" stroke="#f00000" stroke-width="1.1" /><path d="M196.6,246.7 H202 M196.6,246.7 L193.8,252.4 H197" fill="none" stroke="#dcdca4" stroke-width="0.9" /><path d="M199,247.5 H203.5 L206.6,250.6 V260.2 H197.2 V252.5 Z" fill="#fffff6" /><path d="M207,250.4 V260.7 H197" fill="none" stroke="#304878" stroke-width="1.7" /><path d="M203.5,247.3 L207,250.8" fill="none" stroke="#4a68a8" stroke-width="1.4" /><rect x="204.4" y="248.6" width="1.2" height="1.2" fill="#fffff6" /><rect x="193.4" y="252.2" width="2.8" height="0.9" fill="#a85050" /><g shape-rendering="crispEdges"><rect x="201" y="249" width="1" height="1" fill="#f04020" /><rect x="201" y="251" width="2" height="1" fill="#f04020" /><rect x="201" y="253" width="2" height="1" fill="#8898d8" /><rect x="203" y="253" width="2" height="1" fill="#f04020" /><rect x="199" y="255" width="4" height="1" fill="#f04020" /><rect x="199" y="257" width="2" height="1" fill="#8898d8" /><rect x="201" y="257" width="4" height="1" fill="#f04020" /><rect x="199" y="259" width="3" height="1" fill="#c8d0e8" /></g><path d="M203,246.3 L197.6,250.9 M201,251 L194.2,256.8" fill="none" stroke="#f8d428" stroke-width="1.9" /><path d="M203.6,246.8 L198.6,251.2 M201.6,251.6 L195,257.2" fill="none" stroke="#705018" stroke-width="0.6" /><path d="M27.8,741 H35.6 L39.2,744.6 V755 H27.8 Z" fill="#fffff0" stroke="#00409c" stroke-width="1.4" /><path d="M35.4,741.2 V745 H39" fill="none" stroke="#00409c" stroke-width="1" /><path d="M31,752.2 L39.2,752.2 L39.2,754.4 L29,754.4 Z" fill="#c0d8f8" /><path d="M30.6,752.6 L40.2,743.6" fill="none" stroke="#f0b000" stroke-width="2.2" /><circle cx="40.6" cy="743.2" r="1.1" fill="#ff8080" /><path d="M76,742 L87.5,754.5 M87,741.6 L75,754" fill="none" stroke="#fffff0" stroke-width="1.2" transform="translate(1,1)"/><path d="M75,742.4 L84,751.6 M86.6,742 L75,754" fill="none" stroke="#808080" stroke-width="3" /><path d="M84,751 L88,755" fill="none" stroke="#808080" stroke-width="1.2" /><g transform="translate(1,1)" fill="#fffff0"><rect x="109" y="744" width="2.4" height="10"/><path d="M118,744 V754 L111.6,749 Z"/></g><g fill="#808080"><rect x="109" y="744" width="2.4" height="10"/><path d="M118,744 V754 L111.6,749 Z"/></g><g transform="translate(1,1)" fill="#fffff0"><path d="M139,744 V754 L132.8,749 Z"/></g><g fill="#808080"><path d="M139,744 V754 L132.8,749 Z"/></g><g transform="translate(1,1)" fill="#fffff0"><path d="M157,744 V754 L163.2,749 Z"/></g><g fill="#808080"><path d="M157,744 V754 L163.2,749 Z"/></g><g transform="translate(1,1)" fill="#fffff0"><path d="M178,744 V754 L184.4,749 Z"/><rect x="184.4" y="744" width="2.4" height="10"/></g><g fill="#808080"><path d="M178,744 V754 L184.4,749 Z"/><rect x="184.4" y="744" width="2.4" height="10"/></g><path d="M205,740.6 Q212.6,740.6 212.6,746.6 Q212.6,752 207,752.6 L205.6,755.6 L204.4,752.6 Q197.6,752 197.6,746.6 Q197.6,740.6 205,740.6 Z" fill="url(#ginfo)" stroke="#a8c8e8" stroke-width="0.8" /><text x="205.2" y="751.2" text-anchor="middle" font-family="Liberation Serif, serif" font-weight="bold" font-size="12" fill="#102890" opacity="0.99">i</text><rect x="222" y="742" width="14" height="14" fill="#fffff0" shape-rendering="crispEdges"/><rect x="221" y="741" width="14" height="14" fill="#808080" shape-rendering="crispEdges"/><path d="M258,742 H263.5 L264,744 H269 V751 L266.5,751.5 V756 H259.5 L259,753.5 H254.5 V746.5 L257.5,746 Z" fill="#fffff0" stroke="none" stroke-width="1" transform="translate(1,1)"/><path d="M258,742 H263.5 L264,744 H269 V751 L266.5,751.5 V756 H259.5 L259,753.5 H254.5 V746.5 L257.5,746 Z" fill="#808080" /><rect x="261" y="748" width="1.4" height="1.4" fill="#fffff0" /><path d="M290.4,742 h2.4 v2 l1.4,2 v9 h-5.2 v-9 l1.4,-2 Z" fill="#000" /><path d="M296,742 h2.4 v2 l2.6,4 v7 h-6.4 v-9 l1.4,-2 Z" fill="#000" /><rect x="291.2" y="742.8" width="1" height="1" fill="#fffff0" /><rect x="296.8" y="742.8" width="1" height="1" fill="#fffff0" /><rect x="298.6" y="750" width="1" height="3.4" fill="#fffff0" /><rect x="286.6" y="747.6" width="9" height="8" fill="#fffff0" stroke="#00409c" stroke-width="1.2"/><rect x="286.6" y="747.6" width="9" height="1.6" fill="#00409c" /><text x="291.1" y="754.6" text-anchor="middle" font-family="Liberation Sans, sans-serif" font-weight="bold" font-size="6.5" fill="#00328c" stroke="#00328c" stroke-width="0.3" opacity="0.99">W</text><path d="M346.4,742 h2.4 v2 l1.4,2 v9 h-5.2 v-9 l1.4,-2 Z" fill="#000" /><path d="M352,742 h2.4 v2 l2.6,4 v7 h-6.4 v-9 l1.4,-2 Z" fill="#000" /><rect x="347.2" y="742.8" width="1" height="1" fill="#fffff0" /><rect x="352.8" y="742.8" width="1" height="1" fill="#fffff0" /><rect x="354.6" y="750" width="1" height="3.4" fill="#fffff0" /><rect x="342.6" y="747.6" width="9" height="8" fill="#fffff0" stroke="#00409c" stroke-width="1.2"/><rect x="342.6" y="747.6" width="9" height="1.6" fill="#00409c" /><text x="347.1" y="754.6" text-anchor="middle" font-family="Liberation Sans, sans-serif" font-weight="bold" font-size="6.5" fill="#00328c" stroke="#00328c" stroke-width="0.3" opacity="0.99">W</text><rect x="310" y="740.6" width="14.4" height="14" fill="#fffff0" stroke="#00409c" stroke-width="1.3"/><rect x="310.6" y="741.2" width="13.2" height="3.6" fill="#00ff40" /><text x="317.2" y="753.6" text-anchor="middle" font-family="Liberation Sans, sans-serif" font-weight="bold" font-size="10.5" fill="#00328c" stroke="#00328c" stroke-width="0.5" opacity="0.99">W</text><path d="M366.6,741 H380.4 V754.6 H366.6 Z" fill="#fffff0" stroke="#00409c" stroke-width="1.3" /><path d="M374,741 H380.4 V749 Z" fill="#ffff90" stroke="#00409c" stroke-width="0.8" /><text x="372.6" y="753.8" text-anchor="middle" font-family="Liberation Sans, sans-serif" font-weight="bold" font-size="10.5" fill="#00328c" stroke="#00328c" stroke-width="0.5" opacity="0.99">W</text><ellipse cx="410.5" cy="751.7" rx="5.6" ry="4.4" fill="url(#gmsn)" stroke="#c8a8ff" stroke-width="0.8" /><circle cx="409.7" cy="743.6" r="3.4" fill="url(#gmsn)" stroke="#c8a8ff" stroke-width="0.8" /><ellipse cx="403.1" cy="749" rx="3.2" ry="3" fill="#2c2ca0" stroke="#c8a8ff" stroke-width="0.7" /><circle cx="403.1" cy="743.4" r="2.1" fill="#3434a8" stroke="#c8a8ff" stroke-width="0.7" /><rect x="402.1" y="747.2" width="1.2" height="2.6" fill="#ffffe0" /><rect x="403.9" y="747" width="0.9" height="2.4" fill="#ffffe0" /><rect x="402.7" y="742.2" width="1" height="2" fill="#ffffe0" /><ellipse cx="403.5" cy="753.3" rx="2.2" ry="1.5" fill="#2c2c98" /><rect x="421.6" y="740.8" width="14.8" height="14.6" fill="#000" stroke="#ffff00" stroke-width="1.3"/><path d="M424,743.6 Q426.4,742.2 429,743.8 Q431.6,742.2 434,743.6 Q435,747 433.6,749.4 L433.4,753.6 L431.4,753.6 L430.4,749.8 Q429,748.6 427.6,749.8 L426.6,753.6 L424.6,753.6 L424.4,749.4 Q423,747 424,743.6 Z" fill="#fffff0" /><g shape-rendering="crispEdges"><rect x="898" y="749" width="6" height="1" fill="#8a8680" /><rect x="903" y="744" width="1" height="5" fill="#8a8680" /><rect x="896" y="755" width="6" height="1" fill="#8a8680" /><rect x="901" y="750" width="1" height="5" fill="#8a8680" /><rect x="890" y="753" width="5" height="1" fill="#8a8680" /><rect x="891" y="741" width="1" height="6" fill="#0080ff" /><rect x="892" y="741" width="1" height="6" fill="#8c98ff" /><rect x="893" y="741" width="1" height="6" fill="#0080ff" /><rect x="894" y="741" width="1" height="6" fill="#8c98ff" /><rect x="895" y="741" width="1" height="6" fill="#0080ff" /><rect x="896" y="741" width="1" height="6" fill="#8c98ff" /><rect x="897" y="743" width="1" height="6" fill="#0080ff" /><rect x="898" y="743" width="1" height="6" fill="#8c98ff" /><rect x="899" y="743" width="1" height="6" fill="#0080ff" /><rect x="900" y="743" width="1" height="6" fill="#8c98ff" /><rect x="901" y="743" width="1" height="6" fill="#0080ff" /><rect x="902" y="743" width="1" height="6" fill="#8c98ff" /><rect x="889" y="747" width="6" height="1" fill="#3808ff" /><rect x="889" y="748" width="6" height="1" fill="#000080" /><rect x="889" y="749" width="6" height="1" fill="#3808ff" /><rect x="889" y="750" width="6" height="1" fill="#000080" /><rect x="889" y="751" width="6" height="1" fill="#3808ff" /><rect x="889" y="752" width="6" height="1" fill="#000080" /><rect x="895" y="749" width="6" height="1" fill="#3808ff" /><rect x="895" y="750" width="6" height="1" fill="#000080" /><rect x="895" y="751" width="6" height="1" fill="#3808ff" /><rect x="895" y="752" width="6" height="1" fill="#000080" /><rect x="895" y="753" width="6" height="1" fill="#3808ff" /><rect x="895" y="754" width="6" height="1" fill="#000080" /></g><g shape-rendering="crispEdges"><rect x="951" y="741" width="15" height="15" fill="#000" /><rect x="952" y="742" width="13" height="13" fill="#ffffe6" /><rect x="952" y="742" width="13" height="1" fill="#c0f0b0" /><rect x="952" y="742" width="1" height="13" fill="#c0f0b0" /><rect x="974" y="755" width="15" height="1" fill="#8a8680" /><rect x="988" y="741" width="1" height="15" fill="#8a8680" /><rect x="973" y="740" width="15" height="15" fill="#000" /><rect x="974" y="741" width="13" height="6" fill="#ffffe6" /><rect x="974" y="741" width="13" height="1" fill="#c0f0b0" /><rect x="974" y="741" width="1" height="6" fill="#c0f0b0" /><rect x="974" y="748" width="13" height="6" fill="#c8c4bc" /><rect x="997" y="755" width="15" height="1" fill="#8a8680" /><rect x="1011" y="741" width="1" height="15" fill="#8a8680" /><rect x="996" y="740" width="15" height="15" fill="#000" /><rect x="997" y="741" width="13" height="13" fill="#c8c4bc" /></g></svg>
</body></html>
